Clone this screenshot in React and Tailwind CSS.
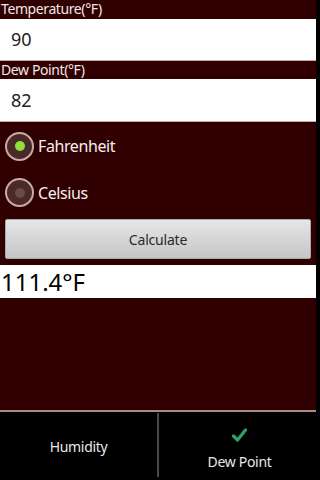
export default function App() {
    return (
        <div className="w-[320px] h-[480px] bg-black flex flex-col overflow-hidden" style={{ fontFamily: '"Noto Sans", "Open Sans", sans-serif' }}>
            {/* Main form area */}
            <div className="w-[316px] h-[410px] bg-[#300000] flex flex-col">
                <div className="h-[19px] text-[14px] leading-[18px] tracking-[-0.4px] text-[#f0e6e6] pl-[1px]">Temperature(°F)</div>
                <div className="h-[42px] bg-white flex items-center pl-[11px] text-[18px] text-[#222] border-b border-[#c9a8a8]">90</div>
                <div className="h-[18px] text-[14px] leading-[18px] tracking-[-0.4px] text-[#f0e6e6] pl-[1px]">Dew Point(°F)</div>
                <div className="h-[43px] bg-white flex items-center pl-[11px] text-[18px] text-[#222] border-b border-[#c9a8a8]">82</div>

                {/* Radios */}
                <div className="h-[47px] flex items-center pl-[5px] pt-[1px]">
                    <div className="w-[29px] h-[29px] rounded-full border-2 border-[#c9aaa5] bg-[#4a2a28] flex items-center justify-center">
                        <div className="w-[10px] h-[10px] rounded-full bg-[#8fe03a]" />
                    </div>
                    <span className="ml-[4px] text-[16px] tracking-[-0.4px] text-[#f5eeee]">Fahrenheit</span>
                </div>
                <div className="h-[47px] flex items-center pl-[5px]">
                    <div className="w-[29px] h-[29px] rounded-full border-2 border-[#c9aaa5] bg-[#4a2a28] flex items-center justify-center">
                        <div className="w-[10px] h-[10px] rounded-full bg-[#6a4a48]" />
                    </div>
                    <span className="ml-[4px] text-[16px] tracking-[-0.4px] text-[#f5eeee]">Celsius</span>
                </div>

                {/* Button */}
                <div className="px-[5px] pt-[3px]">
                    <div className="h-[40px] rounded-[2px] bg-gradient-to-b from-[#e6e6e6] to-[#c6c6c6] border border-[#aaa] flex items-center justify-center text-[14px] tracking-[-0.2px] text-[#2a2a2a]">Calculate</div>
                </div>

                {/* Result */}
                <div className="mt-[6px] h-[33px] bg-white flex items-center pl-[1px] text-[24px] text-black leading-none">111.4°F</div>
            </div>

            <div className="h-[2px] w-[316px] bg-[#a88a88]" />

            {/* Tabs */}
            <div className="flex-1 flex">
                <div className="w-[157px] flex items-center justify-center text-[14px] tracking-[-0.3px] text-[#e8e8e8]">Humidity</div>
                <div className="w-[2px] bg-[#4a4a4a] my-[1px] mb-[3px]" />
                <div className="flex-1 flex flex-col items-center pt-[16px]">
                    <svg width="15" height="14" viewBox="0 0 15 14">
                        <path d="M1.5 8 L5.5 12 L13.5 2" fill="none" stroke="#2fa066" strokeWidth="3.2" strokeLinecap="round" strokeLinejoin="round" />
                    </svg>
                    <span className="mt-[11px] text-[14px] leading-[17px] tracking-[-0.3px] text-[#e8e8e8]">Dew Point</span>
                </div>
            </div>
        </div>
    );
}
